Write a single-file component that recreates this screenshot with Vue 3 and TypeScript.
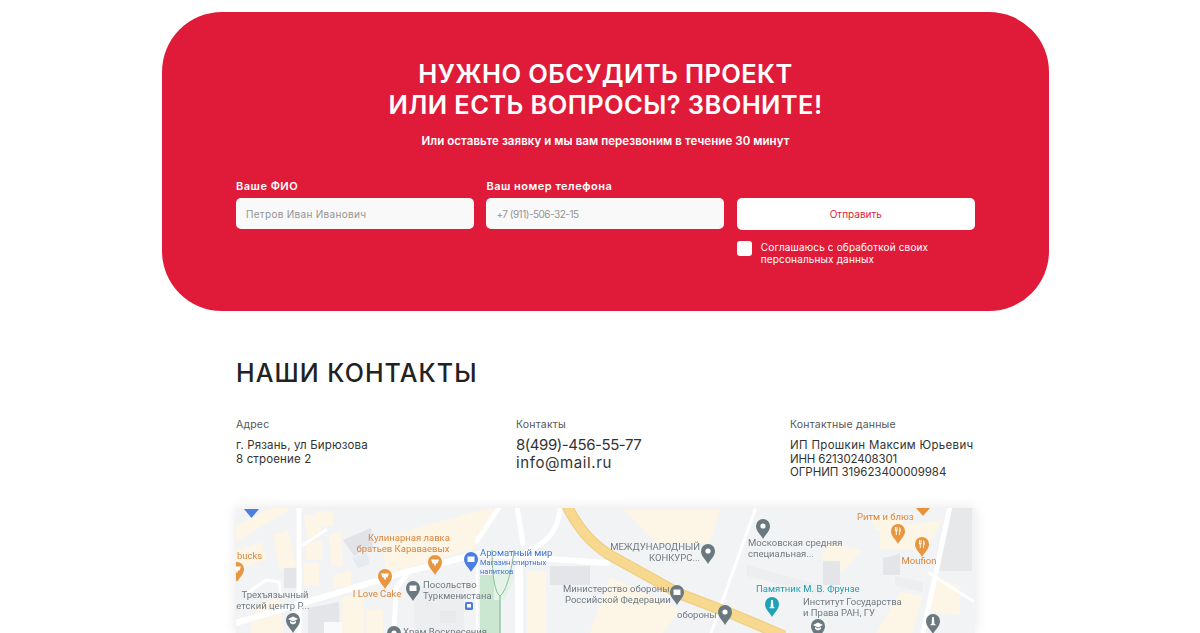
<template>
  <div class="page">
    <section class="callback">
      <h2 class="callback__title">НУЖНО ОБСУДИТЬ ПРОЕКТ<br />ИЛИ ЕСТЬ ВОПРОСЫ? ЗВОНИТЕ!</h2>
      <p class="callback__sub">Или оставьте заявку и мы вам перезвоним в течение 30 минут</p>
      <form class="callback__form" @submit.prevent>
        <label class="field">
          <span class="field__label">Ваше ФИО</span>
          <input class="field__input" type="text" placeholder="Петров Иван Иванович" />
        </label>
        <label class="field">
          <span class="field__label">Ваш номер телефона</span>
          <input class="field__input field__input--tel" type="tel" placeholder="+7 (911)-506-32-15" />
        </label>
        <div class="submit">
          <button class="submit__btn" type="submit">Отправить</button>
          <label class="agree">
            <span class="agree__box"></span>
            <span class="agree__text">Соглашаюсь с обработкой своих<br />персональных данных</span>
          </label>
        </div>
      </form>
    </section>

    <section class="contacts">
      <h2 class="contacts__title">НАШИ КОНТАКТЫ</h2>
      <div class="contacts__cols">
        <div class="col col--address">
          <div class="col__label">Адрес</div>
          <div class="col__text">г. Рязань, ул Бирюзова<br />8 строение 2</div>
        </div>
        <div class="col col--phone">
          <div class="col__label">Контакты</div>
          <div class="col__big">
            <div class="col__tel">8(499)-456-55-77</div>
            <div class="col__mail">info@mail.ru</div>
          </div>
        </div>
        <div class="col col--legal">
          <div class="col__label">Контактные данные</div>
          <div class="col__text">
            <div>ИП Прошкин Максим Юрьевич</div>
            <div class="col__inn">ИНН 621302408301</div>
            <div class="col__ogrn">ОГРНИП 319623400009984</div>
          </div>
        </div>
      </div>

      <div class="map">
        <svg class="map__svg" width="739" height="125" viewBox="0 0 739 125">
          <rect width="739" height="125" fill="#f2f3f5" />
          <path v-for="(b, i) in blocks" :key="'b' + i" :d="b.d" :fill="b.fill" />
          <path
            v-for="(r, i) in roads"
            :key="'r' + i"
            :d="r.d"
            fill="none"
            stroke="#fff"
            :stroke-width="r.w"
            stroke-linecap="round"
          />
          <path d="M330 -4 C342 20 354 34 372 46 L444 86 L494 105 L548 128" fill="none" stroke="#efcb7c" stroke-width="11" />
          <path d="M330 -4 C342 20 354 34 372 46 L444 86 L494 105 L548 128" fill="none" stroke="#f7d88f" stroke-width="9" />
          <path d="M256 42 C256 62 258 84 264 88 C270 84 276 62 278 42" fill="none" stroke="#86c096" stroke-width="1" />
          <path d="M264 88 L264 125" fill="none" stroke="#86c096" stroke-width="1.2" />
          <path d="M8 1 H23 L15.5 10 Z" fill="#4a7fe0" />
          <path d="M680 0 H694 L687 8 Z" fill="#e8913a" />
          <g v-for="(p, i) in pins" :key="'p' + i" :transform="`translate(${p.x} ${p.y})`">
            <path d="M0 12 C-2 8 -7 4.5 -7 -1 A7 7 0 1 1 7 -1 C7 4.5 2 8 0 12 Z" :fill="p.color" />
            <path v-if="p.icon === 'cup'" d="M-4 -3.5 H4 L2.5 0.5 H0.8 V2.5 H-0.8 V0.5 H-2.5 Z" fill="#fff" />
            <path v-else-if="p.icon === 'fork'" d="M-3 -5 H-2 V-2 H-1.5 V-5 H-0.5 V-1 L-1.3 -0.4 V3 H-2.2 V-0.4 L-3 -1 Z M1.3 -5 C3 -4 3 -1 2.5 0 H2 V3 H1.1 Z" fill="#fff" />
            <path v-else-if="p.icon === 'hat'" d="M0 -4.5 L5 -2 L0 0.5 L-5 -2 Z M-3 0 L0 1.6 L3 0 V2 L0 3.4 L-3 2 Z" fill="#fff" />
            <path v-else-if="p.icon === 'bag'" d="M-3.5 -3.5 H3.5 V2 H-3.5 Z" fill="#fff" />
            <path v-else-if="p.icon === 'statue'" d="M-0.9 -5 H0.9 L1.4 2 H2.4 V3.2 H-2.4 V2 H-1.4 Z" fill="#fff" />
            <circle v-else cx="0" cy="-1" r="2.6" fill="#fff" />
          </g>
          <rect x="229" y="94" width="8" height="8" rx="1.5" fill="#4a7fe0" />
          <rect x="231" y="96" width="4" height="3.5" fill="#fff" />
          <text
            v-for="(l, i) in labels"
            :key="'l' + i"
            class="map__label"
            :x="l.x"
            :y="l.y"
            :fill="l.color"
            :text-anchor="l.anchor || 'start'"
            :font-size="l.size || 9.5"
          >{{ l.text }}</text>
        </svg>
      </div>
    </section>
  </div>
</template>

<script setup lang="ts">
interface Block { d: string; fill: string }
interface Road { d: string; w: number }
interface Pin { x: number; y: number; color: string; icon?: string }
interface Label { x: number; y: number; text: string; color: string; anchor?: string; size?: number }

const CREAM = '#fdf5e6'
const GREY = '#e3e5e8'
const PALE = '#eceef0'
const GREEN = '#cbe7d2'

const PIN_GREY = '#69797f'
const PIN_ORANGE = '#e8963f'
const PIN_BLUE = '#4a7fe0'
const PIN_TEAL = '#1ea3b5'
const TXT_GREY = '#6f7a82'
const TXT_ORANGE = '#d9853f'
const TXT_BLUE = '#3f74d8'

const blocks: Block[] = [
  // left quarter
  { d: 'M0 18 L34 0 H56 L0 34 Z', fill: CREAM },
  { d: 'M37 27 L52 22 L60 58 L44 62 Z', fill: CREAM },
  { d: 'M0 42 L26 34 L30 52 L0 62 Z', fill: CREAM },
  { d: 'M68 7 H85 V27 L72 32 Z', fill: CREAM },
  { d: 'M80 3 H97 V18 H84 Z', fill: CREAM },
  { d: 'M70 36 L86 32 V52 H70 Z', fill: CREAM },
  { d: 'M68 55 H83 V78 H68 Z', fill: CREAM },
  { d: 'M93 27 L105 24 L107 57 H95 Z', fill: CREAM },
  { d: 'M98 67 L115 62 V79 H98 Z', fill: CREAM },
  { d: 'M48 60 H62 V80 H48 Z', fill: GREY },
  { d: 'M107 32 L135 20 L137 38 L118 48 Z', fill: '#e1e3e6' },
  { d: 'M116 50 L131 44 L134 56 L122 60 Z', fill: '#e6ebf0' },
  { d: 'M72 100 L103 94 V125 H72 Z', fill: GREY },
  { d: 'M88 114 H120 V125 H88 Z', fill: '#f9fafb' },
  { d: 'M106 90 L128 84 V125 H106 Z', fill: CREAM },
  { d: 'M130 102 H147 V125 H130 Z', fill: CREAM },
  { d: 'M20 96 L44 90 L48 125 H14 Z', fill: CREAM },
  // labels area
  { d: 'M146 30 L240 3 L262 0 L240 40 L150 66 Z', fill: CREAM },
  { d: 'M178 78 H228 V125 H178 Z', fill: PALE },
  { d: 'M204 103 H220 V115 H204 Z', fill: '#e8eaec' },
  // centre
  { d: 'M244 67 H264 V125 H244 Z', fill: GREEN },
  { d: 'M258 62 H278 V72 L268 92 H258 Z', fill: '#e4f2e7' },
  { d: 'M291 63 H310 V125 H291 Z', fill: CREAM },
  { d: 'M314 58 H354 V77 H314 Z', fill: GREY },
  { d: 'M388 2 H484 L474 35 H420 Z', fill: CREAM },
  { d: 'M374 69 L444 102 L427 125 H354 Z', fill: CREAM },
  // right
  { d: 'M644 20 L707 12 L690 42 L644 42 Z', fill: CREAM },
  { d: 'M591 33 L626 43 L607 63 L585 50 Z', fill: CREAM },
  { d: 'M634 8 H672 L660 22 H640 Z', fill: CREAM },
  { d: 'M511 57 L587 78 V87 L511 68 Z', fill: PALE },
  { d: 'M587 53 H604 V77 H587 Z', fill: GREY },
  { d: 'M647 50 L664 46 V67 H647 Z', fill: GREY },
  { d: 'M659 68 L687 74 V84 L659 78 Z', fill: PALE },
  { d: 'M664 84 L687 88 L676 125 H640 Z', fill: CREAM },
  { d: 'M716 0 H736 V63 H703 Z', fill: '#e6e8ea' },
  { d: 'M700 70 L724 78 V107 L690 104 Z', fill: CREAM }
]

const roads: Road[] = [
  { d: 'M63 -2 V125', w: 5 },
  { d: 'M67 37 L90 22', w: 3 },
  { d: 'M-4 116 L64 96 L170 64 L242 46 L371 55', w: 6 },
  { d: 'M13 84 L30 72 L43 74 L45 87', w: 3 },
  { d: 'M158 125 L160 80 L170 68', w: 5 },
  { d: 'M283 125 V50', w: 8 },
  { d: 'M241 125 V46', w: 2.5 },
  { d: 'M241 33 L264 -2', w: 5 },
  { d: 'M281 -2 L287 36', w: 5 },
  { d: 'M324 2 C322 22 310 36 290 44', w: 5 },
  { d: 'M519 2 L475 125', w: 3 },
  { d: 'M714 -2 L687 125', w: 5 },
  { d: 'M693 65 L737 93', w: 3 }
]

const pins: Pin[] = [
  { x: 199, y: 55, color: PIN_ORANGE, icon: 'cup' },
  { x: 149, y: 69, color: PIN_ORANGE, icon: 'cup' },
  { x: 1, y: 62, color: PIN_ORANGE, icon: 'cup' },
  { x: 235, y: 52, color: PIN_BLUE, icon: 'bag' },
  { x: 177, y: 81, color: PIN_GREY, icon: 'bag' },
  { x: 57, y: 113, color: PIN_GREY, icon: 'hat' },
  { x: 158, y: 126, color: PIN_GREY },
  { x: 472, y: 44, color: PIN_GREY },
  { x: 441, y: 85, color: PIN_GREY, icon: 'bag' },
  { x: 489, y: 105, color: PIN_GREY },
  { x: 527, y: 19, color: PIN_GREY },
  { x: 662, y: 24, color: PIN_ORANGE, icon: 'fork' },
  { x: 686, y: 37, color: PIN_ORANGE, icon: 'fork' },
  { x: 536, y: 97, color: PIN_TEAL, icon: 'statue' },
  { x: 582, y: 119, color: PIN_GREY, icon: 'hat' },
  { x: 697, y: 114, color: PIN_GREY, icon: 'statue' }
]

const labels: Label[] = [
  { x: 1, y: 51, text: 'bucks', color: TXT_ORANGE },
  { x: 173, y: 33, text: 'Кулинарная лавка', color: TXT_ORANGE, anchor: 'middle' },
  { x: 167, y: 44, text: 'братьев Караваевых', color: TXT_ORANGE, anchor: 'middle' },
  { x: 141, y: 89, text: 'I Love Cake', color: TXT_ORANGE, anchor: 'middle' },
  { x: 187, y: 80, text: 'Посольство', color: TXT_GREY },
  { x: 187, y: 91, text: 'Туркменистана', color: TXT_GREY },
  { x: 39, y: 90, text: 'Трехъязычный', color: TXT_GREY, anchor: 'middle' },
  { x: 34, y: 101, text: 'детский центр Р...', color: TXT_GREY, anchor: 'middle' },
  { x: 167, y: 127, text: 'Храм Воскресения', color: TXT_GREY },
  { x: 244, y: 48, text: 'Ароматный мир', color: TXT_BLUE },
  { x: 244, y: 57, text: 'Магазин спиртных', color: TXT_BLUE, size: 7.5 },
  { x: 244, y: 66, text: 'напитков', color: TXT_BLUE, size: 7.5 },
  { x: 464, y: 42, text: 'МЕЖДУНАРОДНЫЙ', color: TXT_GREY, anchor: 'end' },
  { x: 464, y: 53, text: 'КОНКУРС...', color: TXT_GREY, anchor: 'end' },
  { x: 327, y: 84, text: 'Министерство обороны', color: TXT_GREY },
  { x: 329, y: 95, text: 'Российской Федерации', color: TXT_GREY },
  { x: 441, y: 110, text: 'обороны', color: TXT_GREY },
  { x: 512, y: 38, text: 'Московская средняя', color: TXT_GREY },
  { x: 512, y: 49, text: 'специальная...', color: TXT_GREY },
  { x: 621, y: 12, text: 'Ритм и блюз', color: TXT_ORANGE },
  { x: 683, y: 56, text: 'Moufion', color: TXT_ORANGE, anchor: 'middle' },
  { x: 520, y: 84, text: 'Памятник М. В. Фрунзе', color: '#1f9cae' },
  { x: 567, y: 97, text: 'Институт Государства', color: TXT_GREY },
  { x: 567, y: 108, text: 'и Права РАН, ГУ', color: TXT_GREY }
]
</script>

<style>
html, body { margin: 0; background: #fff; overflow: hidden; }
</style>

<style scoped>
.page {
  box-sizing: border-box;
  width: 887px;
  height: 633px;
  margin-left: 162px;
  padding-top: 12px;
  overflow: hidden;
  font-family: Inter, "Noto Sans", sans-serif;
}

.callback {
  box-sizing: border-box;
  height: 299px;
  padding: 46px 74px 0;
  border-radius: 60px;
  background: #e01b3a;
  color: #fff;
}
.callback__title {
  margin: 0;
  font-size: 25.5px;
  line-height: 31px;
  font-weight: 600;
  letter-spacing: 0.4px;
  text-align: center;
}
.callback__sub {
  margin: 13px 0 0;
  font-size: 11.5px;
  line-height: 16px;
  font-weight: 600;
  letter-spacing: 0.07px;
  text-align: center;
}
.callback__form {
  display: grid;
  grid-template-columns: 238px 238px 238px;
  column-gap: 12.4px;
  margin-top: 30px;
}
.field {
  display: flex;
  flex-direction: column;
  gap: 5px;
}
.field__label {
  font-size: 11px;
  line-height: 14px;
  font-weight: 600;
  letter-spacing: 0.5px;
}
.field__input {
  box-sizing: border-box;
  width: 100%;
  height: 31px;
  padding: 0 10px;
  border: none;
  border-radius: 5px;
  background: #f9f9f9;
  font-family: inherit;
  font-size: 10px;
  letter-spacing: 0.3px;
  outline: none;
}
.field__input--tel { letter-spacing: -0.5px; }
.field__input::placeholder { color: #949494; }

.submit { padding-top: 19px; }
.submit__btn {
  display: block;
  width: 100%;
  height: 32px;
  border: none;
  border-radius: 5px;
  background: #fff;
  color: #e01b3a;
  font-family: inherit;
  font-size: 10px;
}
.agree {
  display: flex;
  gap: 9px;
  margin-top: 11px;
}
.agree__box {
  flex: none;
  width: 15px;
  height: 15px;
  border-radius: 3px;
  background: #fff;
}
.agree__text {
  font-size: 10px;
  line-height: 12px;
  letter-spacing: 0.15px;
}

.contacts { padding: 47px 74px 0; }
.contacts__title {
  margin: 0;
  font-size: 25px;
  line-height: 30px;
  font-weight: 500;
  letter-spacing: 1.05px;
  color: #222;
}
.contacts__cols {
  display: flex;
  margin-top: 30px;
  color: #333;
}
.col--address { width: 280px; }
.col--phone { width: 274px; }
.col__label {
  font-size: 10.5px;
  line-height: 14px;
  font-weight: 400;
  letter-spacing: 0.2px;
  color: #555;
}
.col__text {
  margin-top: 7px;
  font-size: 11.5px;
  line-height: 13.5px;
  letter-spacing: 0.32px;
}
.col--address .col__text { letter-spacing: 0.14px; }
.col__inn { letter-spacing: -0.18px; }
.col__ogrn { letter-spacing: -0.04px; }
.col__big {
  margin-top: 4px;
  font-size: 15px;
  line-height: 18px;
}
.col__tel { letter-spacing: -0.45px; }
.col__mail { letter-spacing: 0.6px; }

.map {
  margin-top: 28px;
  height: 125px;
  box-shadow: 0 0 12px rgba(0, 0, 0, 0.1);
}
.map__svg {
  display: block;
  filter: blur(0.5px);
}
.map__label {
  font-family: Roboto, "Noto Sans", sans-serif;
}
</style>
